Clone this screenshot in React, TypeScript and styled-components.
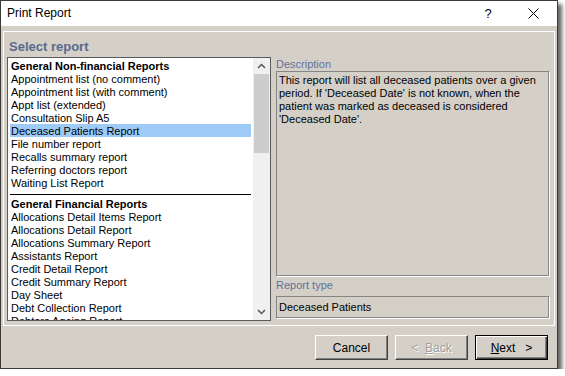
import styled, { createGlobalStyle } from 'styled-components'

const GlobalStyle = createGlobalStyle`
  html, body {
    margin: 0;
    padding: 0;
    background: #ffffff;
  }
  body {
    font-family: Tahoma, "Liberation Sans", Arial, sans-serif;
    font-size: 11px;
    color: #000;
  }
`

type Row = { label: string; header?: boolean; selected?: boolean; separator?: boolean }

const rows: Row[] = [
  { label: 'General Non-financial Reports', header: true },
  { label: 'Appointment list (no comment)' },
  { label: 'Appointment list (with comment)' },
  { label: 'Appt list (extended)' },
  { label: 'Consultation Slip A5' },
  { label: 'Deceased Patients Report', selected: true },
  { label: 'File number report' },
  { label: 'Recalls summary report' },
  { label: 'Referring doctors report' },
  { label: 'Waiting List Report' },
  { label: '', separator: true },
  { label: 'General Financial Reports', header: true },
  { label: 'Allocations Detail Items Report' },
  { label: 'Allocations Detail Report' },
  { label: 'Allocations Summary Report' },
  { label: 'Assistants Report' },
  { label: 'Credit Detail Report' },
  { label: 'Credit Summary Report' },
  { label: 'Day Sheet' },
  { label: 'Debt Collection Report' },
  { label: 'Debtors Ageing Report' }
]

const Chevron = ({ up }: { up?: boolean }) => (
  <svg width="9" height="6" viewBox="0 0 9 6">
    <path
      d={up ? 'M1 5 L4.5 1.5 L8 5' : 'M1 1 L4.5 4.5 L8 1'}
      fill="none"
      stroke="#555"
      strokeWidth="1.5"
    />
  </svg>
)

export default function App() {
  return (
    <>
      <GlobalStyle />
      <Window>
        <TitleBar>
          <Title>Print Report</Title>
          <TitleControls>
            <HelpButton>?</HelpButton>
            <CloseButton>
              <svg width="11" height="11" viewBox="0 0 11 11">
                <path d="M0.5 0.5 L10.5 10.5 M10.5 0.5 L0.5 10.5" stroke="#000" strokeWidth="1" />
              </svg>
            </CloseButton>
          </TitleControls>
        </TitleBar>
        <Body>
          <Group>
            <Heading>Select report</Heading>
            <Columns>
              <ListBox>
                <Items>
                  {rows.map((row, i) =>
                    row.separator ? (
                      <Separator key={i} />
                    ) : (
                      <Item key={i} $header={row.header} $selected={row.selected}>
                        {row.label}
                      </Item>
                    )
                  )}
                </Items>
                <ScrollBar>
                  <ArrowButton>
                    <Chevron up />
                  </ArrowButton>
                  <Track>
                    <Thumb />
                  </Track>
                  <ArrowButton>
                    <Chevron />
                  </ArrowButton>
                </ScrollBar>
              </ListBox>
              <RightColumn>
                <FieldLabel>Description</FieldLabel>
                <DescriptionBox>
                  This report will list all deceased patients over a given period. If 'Deceased
                  Date' is not known, when the patient was marked as deceased is considered
                  'Deceased Date'.
                </DescriptionBox>
                <FieldLabel $spaced>Report type</FieldLabel>
                <TypeBox>Deceased Patients</TypeBox>
              </RightColumn>
            </Columns>
          </Group>
          <ButtonRow>
            <Button>Cancel</Button>
            <Button disabled>
              &lt;&nbsp;&nbsp;<u>B</u>ack
            </Button>
            <Button $default>
              <u>N</u>ext&nbsp;&nbsp;&nbsp;&gt;
            </Button>
          </ButtonRow>
        </Body>
      </Window>
    </>
  )
}

const Window = styled.div`
  width: 558px;
  height: 369px;
  box-sizing: border-box;
  border: 1px solid #3a3a3a;
  display: flex;
  flex-direction: column;
  box-shadow: 4px 4px 4px rgba(0, 0, 0, 0.6);
`

const TitleBar = styled.div`
  height: 25px;
  flex-shrink: 0;
  background: #ffffff;
  display: flex;
  align-items: center;
  justify-content: space-between;
  padding-left: 6px;
`

const Title = styled.div`
  font-family: "Liberation Sans", Arial, sans-serif;
  font-size: 12px;
  color: #000;
  margin-top: -1px;
`

const TitleControls = styled.div`
  display: flex;
  align-items: center;
  height: 100%;
`

const HelpButton = styled.div`
  width: 44px;
  text-align: center;
  font-family: "Liberation Sans", Arial, sans-serif;
  font-size: 13px;
`

const CloseButton = styled.div`
  width: 46px;
  height: 100%;
  display: flex;
  align-items: center;
  justify-content: center;
  margin-right: 1px;
`

const Body = styled.div`
  flex: 1;
  background: #d4d0c8;
  padding: 5px 2px 0 2px;
  display: flex;
  flex-direction: column;
`

const Group = styled.div`
  border: 1px solid #ffffff;
  padding: 7px 5px 4px 3px;
`

const Heading = styled.div`
  font-family: "Liberation Sans", Arial, sans-serif;
  font-weight: bold;
  font-size: 13px;
  line-height: 16px;
  color: #596a8e;
  padding-left: 2px;
  margin-bottom: 2px;
`

const Columns = styled.div`
  display: flex;
  gap: 5px;
  align-items: flex-start;
`

const ListBox = styled.div`
  width: 264px;
  height: 264px;
  box-sizing: border-box;
  border: 1px solid #5a5a5a;
  background: #ffffff;
  display: flex;
  overflow: hidden;
`

const Items = styled.div`
  flex: 1;
  padding: 1px 2px 0 2px;
  overflow: hidden;
`

const Item = styled.div<{ $header?: boolean; $selected?: boolean }>`
  height: 13px;
  line-height: 14px;
  padding-left: 1px;
  white-space: nowrap;
  font-family: "Liberation Sans", Arial, sans-serif;
  font-size: 11px;
  font-weight: ${(p) => (p.$header ? 'bold' : 'normal')};
  background: ${(p) => (p.$selected ? '#9dcaf7' : 'transparent')};
`

const Separator = styled.div`
  height: 8px;
  box-sizing: border-box;
  padding-top: 5px;
  &::after {
    content: '';
    display: block;
    height: 1px;
    background: #000;
  }
`

const ScrollBar = styled.div`
  width: 17px;
  background: #f0f0f0;
  display: flex;
  flex-direction: column;
`

const ArrowButton = styled.div`
  height: 16px;
  display: flex;
  align-items: center;
  justify-content: center;
`

const Track = styled.div`
  flex: 1;
  padding: 0 1px;
`

const Thumb = styled.div`
  height: 79px;
  background: #cdcdcd;
`

const RightColumn = styled.div`
  width: 273px;
  display: flex;
  flex-direction: column;
`

const FieldLabel = styled.div<{ $spaced?: boolean }>`
  font-family: "Liberation Sans", Arial, sans-serif;
  font-size: 11px;
  line-height: 14px;
  color: #63729b;
  margin-top: ${(p) => (p.$spaced ? '2px' : '0')};
  margin-bottom: ${(p) => (p.$spaced ? '4px' : '0')};
`

const SunkenBox = styled.div`
  box-sizing: border-box;
  border: 1px solid #858585;
  box-shadow: 1px 1px 0 #ffffff;
  background: #d4d0c8;
  font-family: "Liberation Sans", Arial, sans-serif;
  font-size: 11px;
  line-height: 13px;
`

const DescriptionBox = styled(SunkenBox)`
  height: 205px;
  padding: 2px 4px 0 2px;
`

const TypeBox = styled(SunkenBox)`
  height: 22px;
  padding: 0 2px;
  display: flex;
  align-items: center;
`

const ButtonRow = styled.div`
  display: flex;
  justify-content: flex-end;
  gap: 7px;
  padding: 9px 7px 0 0;
`

const Button = styled.button<{ $default?: boolean }>`
  width: 73px;
  height: 25px;
  box-sizing: border-box;
  padding: 0;
  background: #d4d0c8;
  font-family: "Liberation Sans", Arial, sans-serif;
  font-size: 12px;
  color: #000;
  border: 1px solid;
  border-color: ${(p) => (p.$default ? '#000' : '#ffffff #404040 #404040 #ffffff')};
  box-shadow: ${(p) =>
    p.$default
      ? 'inset 1px 1px 0 #ffffff, inset -1px -1px 0 #404040, inset -2px -2px 0 #808080'
      : 'inset -1px -1px 0 #808080'};

  &:disabled {
    color: #a0a0a0;
    text-shadow: 1px 1px 0 #ffffff;
  }
`
